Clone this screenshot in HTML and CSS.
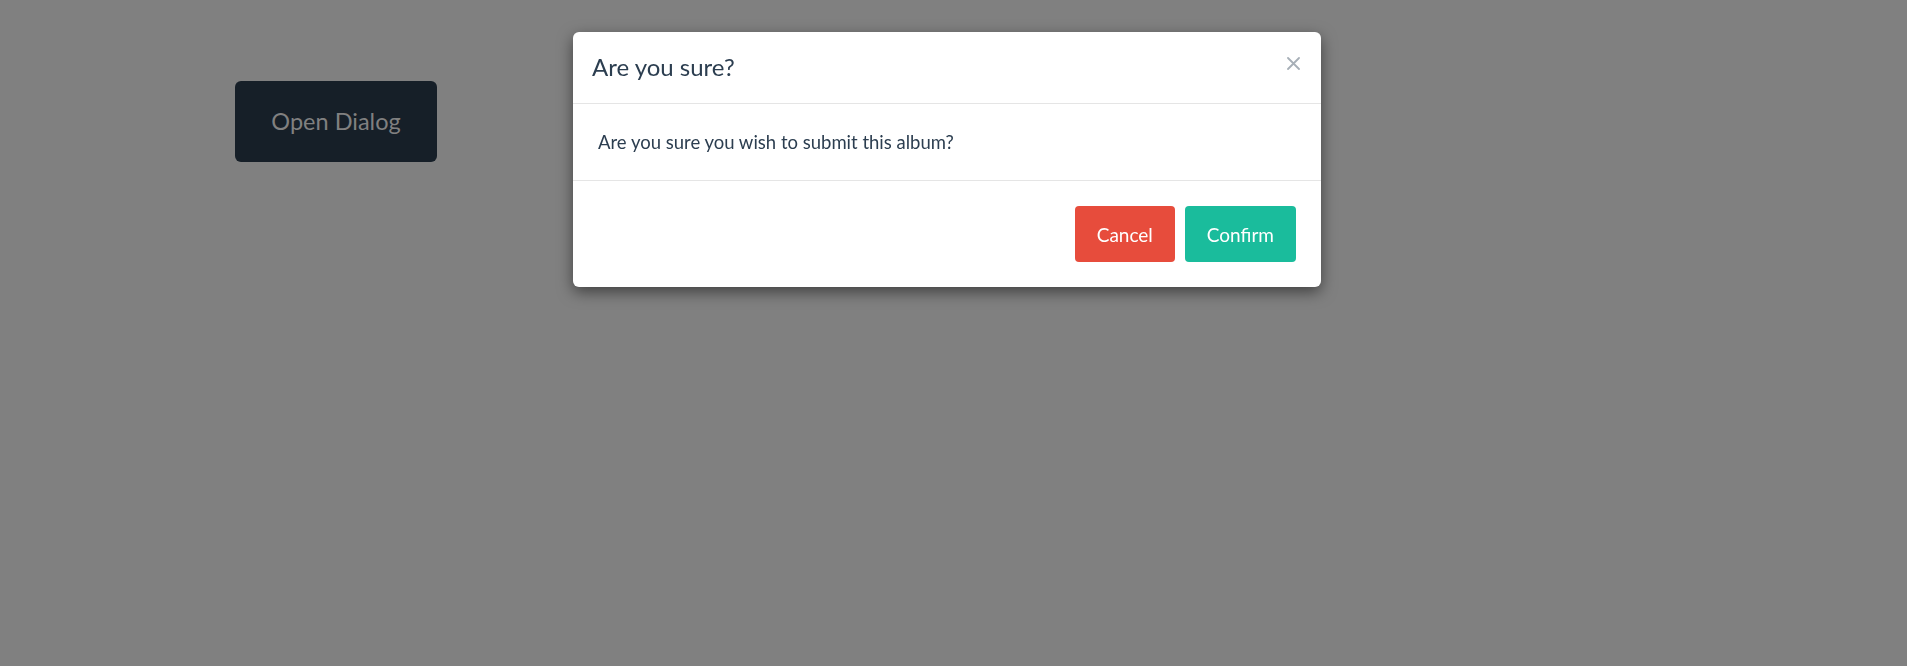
FILE: index.html
```html
<!DOCTYPE html>
<html lang="en">
<head>
<meta charset="utf-8">
<title>Dialog</title>
<link rel="stylesheet" href="styles.css">
</head>
<body>
<main class="page">
  <button class="open-btn" type="button">Open Dialog</button>
</main>
<div class="overlay">
  <div class="modal" role="dialog">
    <header class="modal-header">
      <h2 class="modal-title">Are you sure?</h2>
      <button class="close-btn" type="button" aria-label="Close">
        <svg width="13" height="13" viewBox="0 0 13 13"><path d="M1 1L12 12M12 1L1 12" stroke="currentColor" stroke-width="1.8" stroke-linecap="round" fill="none"/></svg>
      </button>
    </header>
    <section class="modal-body">
      <p class="modal-text">Are you sure you wish to submit this album?</p>
    </section>
    <footer class="modal-footer">
      <button class="btn btn-cancel" type="button">Cancel</button>
      <button class="btn btn-confirm" type="button">Confirm</button>
    </footer>
  </div>
</div>
</body>
</html>
```

FILE: styles.css
```css
html, body {
  margin: 0;
  padding: 0;
  height: 100%;
}
body {
  background: #808080;
  font-family: Lato, "Open Sans", "Liberation Sans", sans-serif;
  overflow: hidden;
}
.page {
  padding: 81px 0 0 235px;
}
.open-btn {
  width: 202px;
  height: 81px;
  background: #161f28;
  color: #808080;
  border: none;
  border-radius: 6px;
  font-family: inherit;
  font-size: 23.5px;
  padding: 0 0 2px;
}
.overlay {
  position: fixed;
  inset: 0;
}
.modal {
  position: absolute;
  left: 573px;
  top: 32px;
  width: 748px;
  background: #fff;
  border-radius: 6px;
  box-shadow: 0 5px 15px rgba(0, 0, 0, 0.5);
  overflow: hidden;
}
.modal-header {
  height: 72px;
  box-sizing: border-box;
  display: flex;
  align-items: center;
  justify-content: space-between;
  padding: 0 21px 3px 19px;
  border-bottom: 1px solid #e5e5e5;
}
.modal-title {
  margin: 0;
  font-size: 24px;
  font-weight: 400;
  color: #2c3e50;
}
.close-btn {
  background: none;
  border: none;
  padding: 0;
  margin-top: -5px;
  color: #a7afb7;
  width: 13px;
  height: 13px;
  display: flex;
}
.modal-body {
  height: 77px;
  box-sizing: border-box;
  display: flex;
  align-items: center;
  padding: 0 25px;
  border-bottom: 1px solid #e5e5e5;
}
.modal-text {
  margin: 0;
  font-size: 18.5px;
  color: #2c3e50;
}
.modal-footer {
  display: flex;
  justify-content: flex-end;
  gap: 10px;
  padding: 25px 25px 25px;
}
.btn {
  height: 56px;
  border: none;
  border-radius: 4px;
  color: #fff;
  font-family: inherit;
  font-size: 19px;
  padding: 0 22px;
}
.btn-cancel {
  background: #e74c3c;
}
.btn-confirm {
  background: #1abc9c;
}
```
